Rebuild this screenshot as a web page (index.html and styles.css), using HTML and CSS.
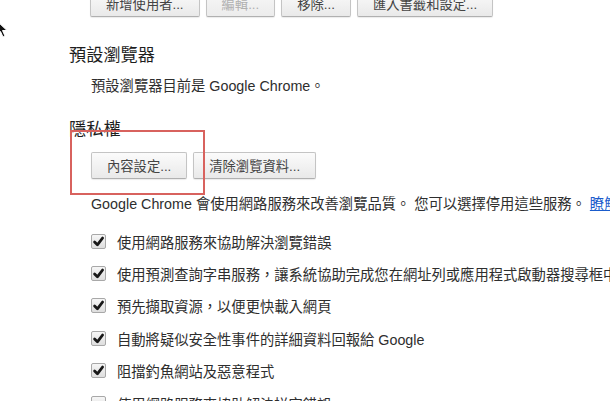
FILE: index.html
```html
<!DOCTYPE html>
<html lang="zh-Hant">
<head>
    <meta charset="UTF-8">
    <meta name="viewport" content="width=device-width, initial-scale=1.0">
    <title>設定</title>
    <link rel="stylesheet" href="styles.css">
</head>
<body>
    <div class="page">
        <div class="btn-row top-row">
            <button class="btn">新增使用者...</button>
            <button class="btn" disabled>編輯...</button>
            <button class="btn">移除...</button>
            <button class="btn">匯入書籤和設定...</button>
        </div>

        <section class="group">
            <h3>預設瀏覽器</h3>
            <div class="group-body">
                <p class="line">預設瀏覽器目前是 Google Chrome。</p>
            </div>
        </section>

        <section class="group privacy">
            <h3>隱私權</h3>
            <div class="group-body">
                <div class="btn-row">
                    <button class="btn">內容設定...</button>
                    <button class="btn">清除瀏覽資料...</button>
                </div>
                <p class="line note">Google Chrome 會使用網路服務來改善瀏覽品質。 您可以選擇停用這些服務。 <a href="#">瞭解詳情</a></p>
                <ul class="checks">
                    <li><span class="box on"></span>使用網路服務來協助解決瀏覽錯誤</li>
                    <li><span class="box on"></span>使用預測查詢字串服務，讓系統協助完成您在網址列或應用程式啟動器搜尋框中輸入的搜尋字詞和網址</li>
                    <li><span class="box on"></span>預先擷取資源，以便更快載入網頁</li>
                    <li><span class="box on"></span>自動將疑似安全性事件的詳細資料回報給 Google</li>
                    <li><span class="box on"></span>阻擋釣魚網站及惡意程式</li>
                    <li><span class="box"></span>使用網路服務來協助解決拼字錯誤</li>
                </ul>
            </div>
        </section>

        <div class="highlight"></div>
    </div>

    <svg class="cursor" width="12" height="18" viewBox="0 0 12 18">
        <path d="M1 1 L1 15 L4.5 11.5 L7 17 L9 16 L6.5 10.5 L11 10.5 Z" fill="#111" stroke="#fff" stroke-width="1"/>
    </svg>
</body>
</html>
```

FILE: styles.css
```css
body {
    margin: 0;
    width: 610px;
    height: 401px;
    overflow: hidden;
    background: #fff;
    color: #2e2e2e;
    font-family: "Liberation Sans", "Noto Sans CJK TC", sans-serif;
    font-size: 14.3px;
}
.page {
    position: relative;
    display: flex;
    flex-direction: column;
    padding-left: 69px;
    white-space: nowrap;
}
.btn-row {
    display: flex;
    gap: 6px;
}
.top-row {
    margin-top: -10px;
    padding-left: 21px;
}
.btn {
    height: 27px;
    box-sizing: border-box;
    padding: 0 15px;
    border: 1px solid #c4c4c4;
    border-bottom-color: #b0b0b0;
    border-radius: 2px;
    background: linear-gradient(#fbfbfb, #e9e9e9);
    box-shadow: 0 1px 1px rgba(0, 0, 0, 0.08);
    color: #444;
    font-family: "Liberation Sans", "Noto Sans CJK TC", sans-serif;
    font-size: 13.3px;
    display: inline-flex;
    align-items: center;
}
.btn:disabled {
    color: #b0b0b0;
    background: linear-gradient(#f7f7f7, #ececec);
}
.group h3 {
    margin: 28px 0 0;
    font-size: 17.2px;
    font-weight: normal;
    line-height: 20px;
    color: #1e1e1e;
}
.privacy h3 {
    margin-top: 24px;
}
.group-body {
    padding-left: 22px;
}
.line {
    margin: 12px 0 0;
    line-height: 18px;
}
.privacy .btn-row {
    margin-top: 13px;
}
.note {
    margin-top: 16px;
}
.note a {
    color: #1a5ccc;
}
.checks {
    list-style: none;
    margin: 12px 0 0;
    padding: 0;
}
.checks li {
    height: 32.4px;
    display: flex;
    align-items: center;
    gap: 11px;
}
.box {
    width: 15px;
    height: 15px;
    box-sizing: border-box;
    border: 1px solid #a8a8a8;
    border-radius: 2px;
    background: linear-gradient(#f6f6f6, #dedede);
    flex: none;
}
.box.on {
    background: url("data:image/svg+xml;utf8,<svg xmlns='http://www.w3.org/2000/svg' width='13' height='13' viewBox='0 0 13 13'><path d='M2.6 7 L5.4 9.8 L10.6 3' fill='none' stroke='%23181818' stroke-width='2.8' stroke-linecap='round' stroke-linejoin='round'/></svg>") center no-repeat, linear-gradient(#f6f6f6, #dedede);
}
.highlight {
    position: absolute;
    left: 70px;
    top: 130px;
    width: 135px;
    height: 65px;
    box-sizing: border-box;
    border: 2px solid #d8625e;
}
.cursor {
    position: absolute;
    left: -4px;
    top: 20px;
}
```
